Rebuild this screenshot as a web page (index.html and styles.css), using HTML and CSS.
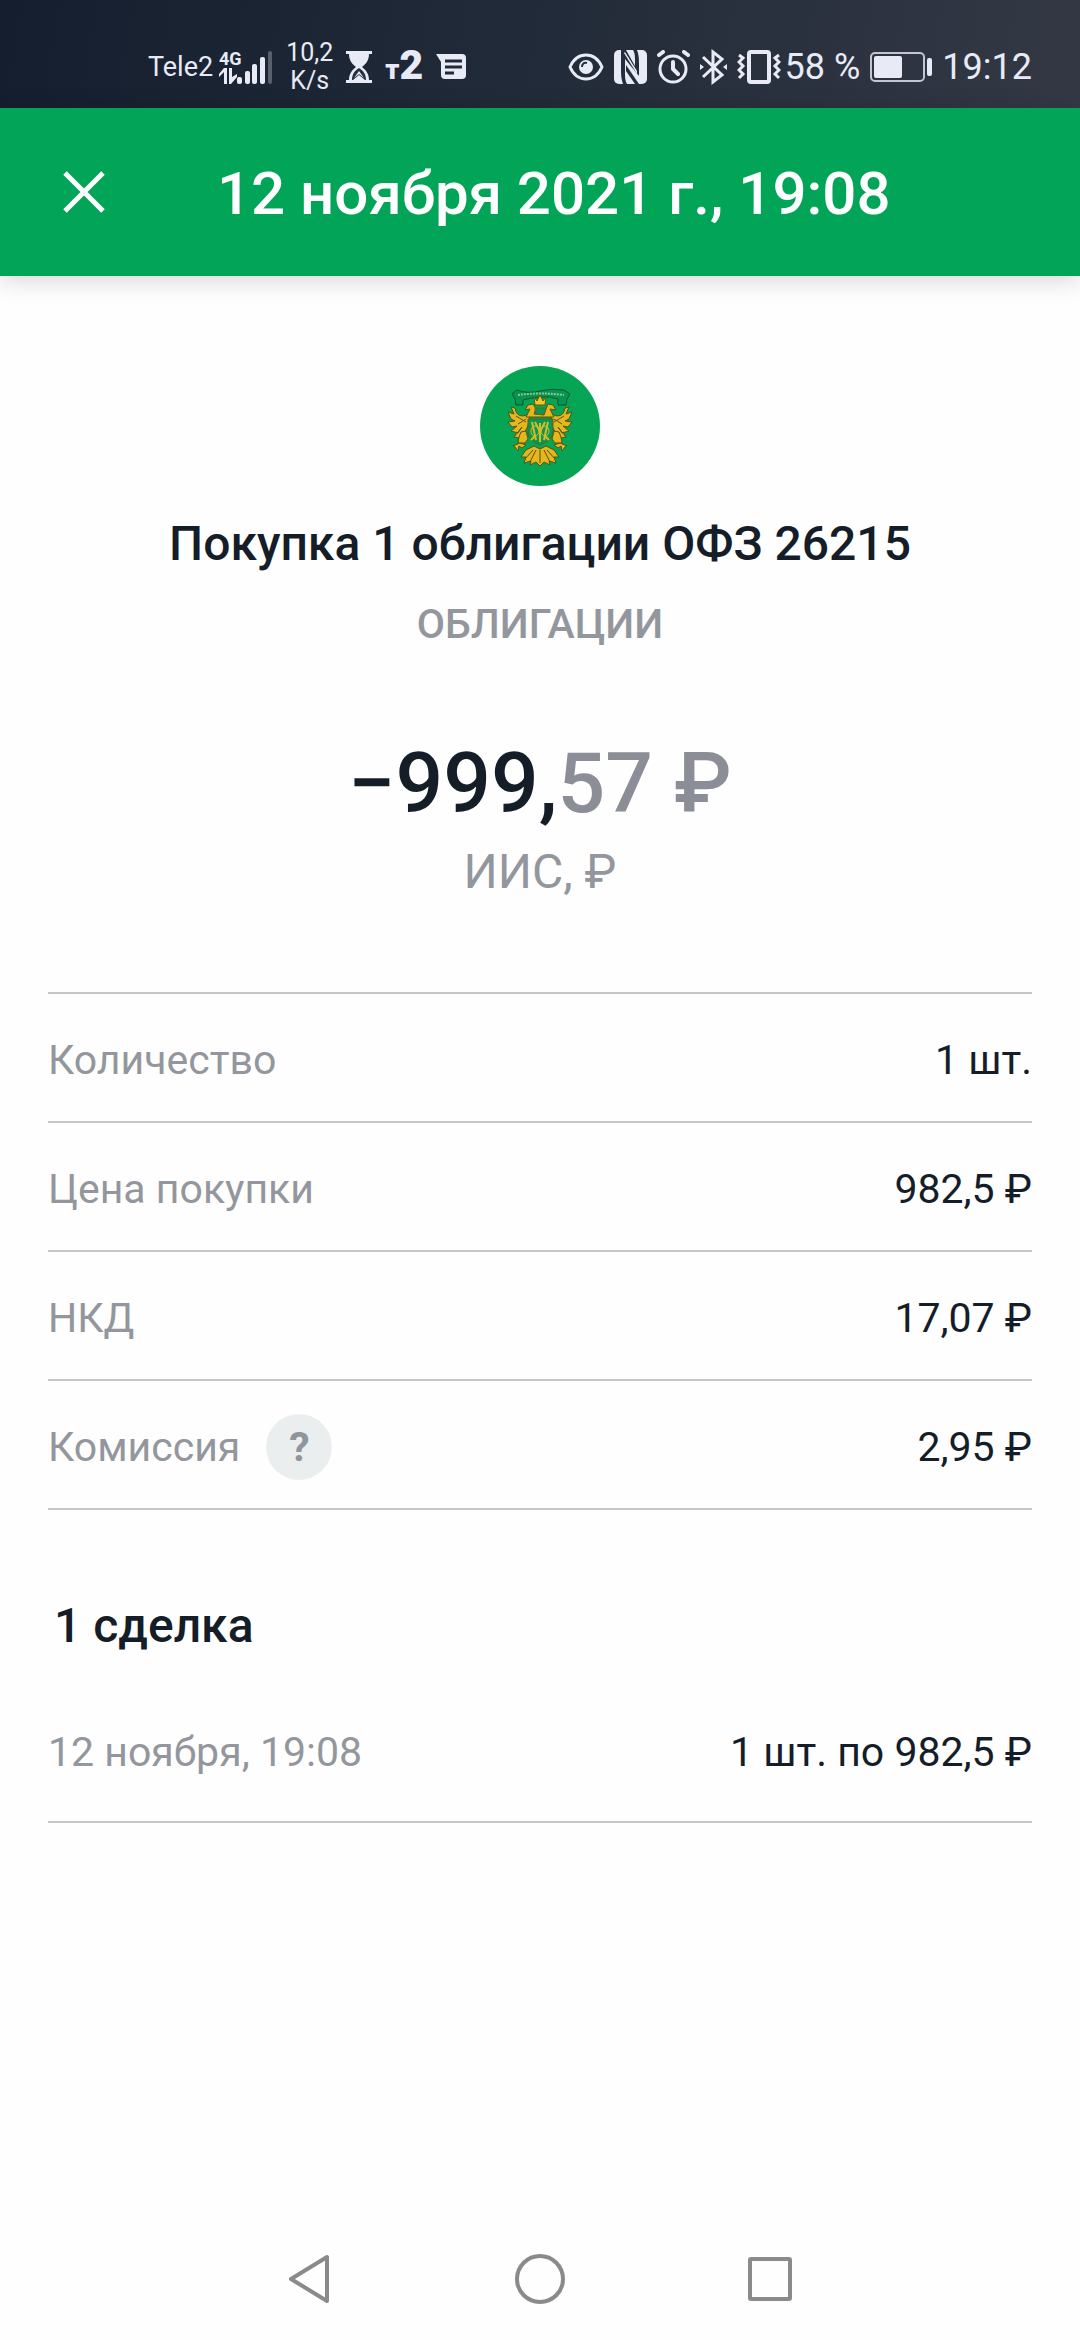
FILE: index.html
```
<!DOCTYPE html>
<html lang="ru">
<head>
    <meta charset="UTF-8">
    <meta name="viewport" content="width=device-width, initial-scale=1.0">
    <title>Покупка 1 облигации ОФЗ 26215</title>
    <link rel="stylesheet" href="styles.css">
</head>
<body>
    <div class="status-bar">
        <div class="status-group status-left">
            <div class="carrier">
                <span>Tele2</span>
                <svg width="54" height="36" viewBox="0 0 54 36" fill="currentColor">
                    <text class="net-type" x="0" y="16">4G</text>
                    <path d="M5 35V23L0 28V25L5 19H8V35zM10 19H13V28L18 25V28L12 35H10z"/>
                    <rect x="18" y="28" width="5" height="7" rx="2"/>
                    <rect x="26" y="22" width="5" height="13" rx="2"/>
                    <rect x="33" y="15" width="5" height="20" rx="2"/>
                    <rect x="41" y="8" width="5" height="27" rx="2"/>
                    <rect x="49" y="2" width="4" height="33" rx="2" opacity="0.3"/>
                </svg>
            </div>
            <div class="speed">10,2<br>K/s</div>
            <svg width="26" height="32" viewBox="0 0 26 32" fill="currentColor">
                <path d="M0 0H26V3H23C23 9 20 13 16 16C20 19 23 23 23 29H26V32H0V29H3C3 23 6 19 10 16C6 13 3 9 3 3H0z"/>
                <path class="cutout" d="M13 17C8 20 6 24 6 29H7L13 24L19 29H20C20 24 18 20 13 17z"/>
                <path d="M13 20L18 27L13 23L8 27z"/>
            </svg>
            <div class="t2"><span>т</span>2</div>
            <svg width="30" height="26" viewBox="0 0 30 26">
                <path fill="currentColor" d="M0 0H26Q30 0 30 4V21Q30 25 26 25H9Q5 25 5 21V8z"/>
                <path class="cutout-line" d="M9 7H26M9 13H26M9 19H18"/>
            </svg>
        </div>
        <div class="status-group">
            <svg width="36" height="28" viewBox="0 0 36 28" fill="none" stroke="currentColor" stroke-width="3">
                <path d="M2 14C9 -2 27 -2 34 14C27 30 9 30 2 14z"/>
                <circle cx="18" cy="14" r="7" fill="currentColor" stroke="none"/>
                <path class="cutout-thin" d="M14 14C14 11 16 9 19 10"/>
            </svg>
            <svg width="33" height="34" viewBox="0 0 33 34">
                <rect width="33" height="34" rx="5" fill="currentColor"/>
                <path class="cutout" d="M7 0H12L21 16V9Q21 3 19 0H23Q25 5 25 13V26L11 9V25Q11 31 13 34H9Q7 29 7 21z"/>
                <path fill="currentColor" d="M10 3L23 24V21L11 2z"/>
                <path class="cutout" d="M12 15L25 34H21L12 21z"/>
            </svg>
            <svg width="33" height="34" viewBox="0 0 33 34" fill="none" stroke="currentColor" stroke-width="3" stroke-linecap="round" stroke-linejoin="round">
                <circle cx="16" cy="19" r="13"/>
                <path stroke-width="4" d="M16 12V19L21 24M2 5L6 2M31 5L27 2"/>
            </svg>
            <svg width="27" height="36" viewBox="0 0 27 36" fill="none" stroke="currentColor" stroke-width="3">
                <path d="M3 8L22 26L13 33V3L22 10L3 28"/>
                <path d="M0 15L4 18L0 21zM27 15L23 18L27 21z" fill="currentColor" stroke="none"/>
            </svg>
            <div class="battery-text">
                <svg width="44" height="34" viewBox="0 0 44 34" fill="none" stroke="currentColor" stroke-width="3">
                    <rect x="12" y="2" width="20" height="30" rx="2" stroke-width="4"/>
                    <path d="M2 5L6 8L2 12L6 16L2 20L6 24L2 28M42 5L38 8L42 12L38 16L42 20L38 24L42 28"/>
                </svg>
                <span>58 %</span>
            </div>
            <svg width="62" height="30" viewBox="0 0 62 30">
                <rect x="1" y="1" width="53" height="28" rx="4" fill="none" stroke="currentColor" stroke-width="2" opacity="0.8"/>
                <rect x="4" y="4" width="28" height="22" rx="2" fill="currentColor"/>
                <rect x="57" y="6" width="5" height="18" rx="2" fill="currentColor"/>
            </svg>
            <span>19:12</span>
        </div>
    </div>

    <header class="header">
        <button class="close" type="button" aria-label="Закрыть">
            <svg width="42" height="42" viewBox="0 0 42 42" stroke="currentColor" stroke-width="5">
                <path d="M2 2L40 40M40 2L2 40"/>
            </svg>
        </button>
        <h1>12 ноября 2021 г., 19:08</h1>
    </header>

    <main class="content">
        <section class="summary">
            <svg class="logo" width="120" height="120" viewBox="0 0 120 120">
                <circle cx="60" cy="60" r="60" fill="#06a556"/>
                <!-- лента -->
                <path d="M32 28L37 24Q48 28 60 25Q72 22 84 24L90 28L87 33L86 39H78V33Q70 30 60 31Q50 32 43 34V39H36L35 33z" fill="#079350" stroke="#07562f" stroke-width="1"/>
                <path d="M38 29Q60 26 84 29" fill="none" stroke="#8fc98b" stroke-width="2" stroke-dasharray="2 1"/>
                <!-- корона -->
                <path d="M54 31L57 35L60 29L63 35L66 31L65 39H55z" fill="#f4c51c" stroke="#5c5a13"/>
                <g fill="#e3b71d" stroke="#545414" stroke-linejoin="round">
                    <!-- крылья -->
                    <path d="M50 48L43 50Q36 50 35 42L31 41L34 48L28 46L31 53L35 55L28 56L32 61L37 60L31 65L38 67L42 61L34 71L40 72L46 64L48 60z"/>
                    <path d="M71 48L77 50Q84 50 85 42L89 41L86 48L92 46L89 53L85 55L92 56L88 61L83 60L89 65L82 67L78 61L86 71L80 72L74 64L72 60z"/>
                    <!-- головы -->
                    <path d="M45 44L48 39L53 38L56 43L54 48L64 49L66 43L68 38L73 39L76 44L70 43L74 51L46 51L50 43z"/>
                    <!-- лапы -->
                    <path d="M41 66L46 65L48 73L45 77L38 77L39 71zM79 66L74 65L72 73L75 77L82 77L81 71z"/>
                    <path d="M33 80L40 77L46 79L42 82L39 80L38 85L35 81zM87 80L80 77L74 79L78 82L81 80L82 85L85 81z"/>
                    <!-- хвост -->
                    <path d="M54 80L46 84L41 91L46 91L44 97L51 95L50 99L56 96L60 100L64 96L70 99L69 95L76 97L74 91L79 91L74 84L66 80L60 83z"/>
                </g>
                <path d="M60 84V97M56 84L50 96M64 84L70 96M53 84L45 93M67 84L75 93M36 50L46 56M84 50L74 56M38 58L46 53M82 58L74 53" stroke="#5d4f10"/>
                <path d="M48 53H73V68Q72 74 60 79Q49 74 48 68z" fill="#079a50" stroke="#665d15"/>
                <path d="M52 56L56 74M68 56L64 74M60 57V76M55 56L60 66L65 56M51 74L56 69M69 74L64 69" fill="none" stroke="#d8bb28" stroke-width="2"/>
                <ellipse cx="55" cy="65" rx="4" ry="5" fill="none" stroke="#d8bb28" stroke-width="1"/>
                <ellipse cx="65" cy="65" rx="4" ry="5" fill="none" stroke="#d8bb28" stroke-width="1"/>
                <path d="M55 42H65V46Q60 51 55 46z" fill="#079a50" stroke="#706614"/>
            </svg>
            <h2>Покупка 1 облигации ОФЗ 26215</h2>
            <p class="category">ОБЛИГАЦИИ</p>
            <p class="amount">−999,<span>57 ₽</span></p>
            <p class="account">ИИС, ₽</p>
        </section>

        <table class="details">
            <tr>
                <th scope="row">Количество</th>
                <td>1 шт.</td>
            </tr>
            <tr>
                <th scope="row">Цена покупки</th>
                <td>982,5 ₽</td>
            </tr>
            <tr>
                <th scope="row">НКД</th>
                <td>17,07 ₽</td>
            </tr>
            <tr>
                <th scope="row">
                    <div class="with-help">
                        <span>Комиссия</span>
                        <button class="help" type="button" aria-label="О комиссии">?</button>
                    </div>
                </th>
                <td>2,95 ₽</td>
            </tr>
        </table>

        <h2 class="deals-title">1 сделка</h2>
        <table class="deals">
            <tr>
                <th scope="row">12 ноября, 19:08</th>
                <td>1 шт. по 982,5 ₽</td>
            </tr>
        </table>
    </main>

    <nav class="nav-bar">
        <button type="button" aria-label="Назад">
            <svg width="52" height="52" viewBox="0 0 52 52">
                <path d="M7 26L43 4V48z"/>
            </svg>
        </button>
        <button type="button" aria-label="Домой">
            <svg width="52" height="52" viewBox="0 0 52 52">
                <circle cx="26" cy="26" r="23"/>
            </svg>
        </button>
        <button type="button" aria-label="Недавние">
            <svg width="52" height="52" viewBox="0 0 52 52">
                <rect x="6" y="6" width="40" height="40" rx="1"/>
            </svg>
        </button>
    </nav>
</body>
</html>
```
FILE: styles.css
```
* {
    box-sizing: border-box;
}
body {
    display: flex;
    flex-direction: column;
    min-height: 100vh;
    margin: 0;
    font-family: Roboto, "Noto Sans", sans-serif;
    background-color: #fefefe;
    color: #151d29;
}
h1, h2, p {
    margin: 0;
    font-weight: 500;
}
button {
    padding: 0;
    border: none;
    background: none;
    font-family: inherit;
}
svg {
    display: block;
    flex-shrink: 0;
}

/* строка состояния */
.status-bar {
    display: flex;
    align-items: center;
    justify-content: space-between;
    height: 108px;
    padding: 26px 48px 0 148px;
    background: linear-gradient(100deg, #141e2e, #222b39 50%, #343845);
    color: #e8ebf6;
    font-size: 36px;
}
.status-group {
    display: flex;
    align-items: center;
    gap: 10px;
    white-space: nowrap;
}
.status-left {
    gap: 13px;
}
.carrier {
    display: flex;
    align-items: center;
    gap: 6px;
    font-size: 27px;
}
.net-type {
    font-size: 18px;
    font-weight: 700;
}
.speed {
    font-size: 25px;
    line-height: 28px;
    text-align: center;
}
.t2 {
    font-size: 41px;
    line-height: 48px;
    font-weight: 900;
}
.t2 span {
    font-size: 27px;
}
.battery-text {
    display: flex;
    align-items: center;
    gap: 4px;
}
.cutout {
    fill: #252e3c;
}
.cutout-line {
    stroke: #202938;
    stroke-width: 3;
}
.cutout-thin {
    fill: none;
    stroke: #252e3c;
    stroke-width: 2;
}

/* шапка */
.header {
    display: flex;
    align-items: center;
    height: 168px;
    padding: 0 63px;
    background-color: #02a557;
    color: #fff;
    box-shadow: 0 4px 24px rgba(0, 0, 0, 0.16);
}
.close {
    color: inherit;
}
.header h1 {
    margin-left: 112px;
    padding-top: 4px;
    font-size: 60px;
    line-height: 72px;
}

/* операция */
.content {
    flex: 1;
    padding: 90px 48px 0;
}
.content h2 {
    font-size: 48px;
    line-height: 56px;
}
.summary {
    display: flex;
    flex-direction: column;
    align-items: center;
    margin-bottom: 92px;
}
.logo {
    margin-bottom: 30px;
}
.category {
    margin-top: 28px;
    font-size: 41px;
    line-height: 48px;
    color: #93979d;
}
.amount {
    margin-top: 86px;
    font-size: 84px;
    line-height: 100px;
}
.amount span {
    color: #8b8e96;
}
.account {
    margin-top: 10px;
    font-size: 48px;
    line-height: 56px;
    font-weight: 400;
    color: #93979d;
}

table {
    width: 100%;
    border-spacing: 0;
    font-size: 41px;
    line-height: 48px;
}
th, td {
    border-bottom: 2px solid #c6c7c9;
}
th {
    padding: 0;
    text-align: left;
    font-weight: 400;
    color: #93979d;
}
td {
    padding: 0;
    text-align: right;
}
.details {
    border-top: 2px solid #c6c7c9;
}
.details th, .details td {
    height: 129px;
    padding-top: 4px;
}
.with-help {
    display: flex;
    align-items: center;
    gap: 26px;
}
.help {
    width: 66px;
    height: 66px;
    border-radius: 50%;
    background-color: #ebeeef;
    color: #8f959b;
    font-size: 41px;
    font-weight: 700;
}
.content .deals-title {
    margin: 88px 0 0 6px;
}
.deals th, .deals td {
    padding: 74px 0 45px;
}

/* системная навигация */
.nav-bar {
    display: flex;
    justify-content: center;
    gap: 178px;
    padding: 35px 0;
}
.nav-bar svg {
    fill: none;
    stroke: #8a8a8a;
    stroke-width: 4;
    stroke-linejoin: round;
}
```
